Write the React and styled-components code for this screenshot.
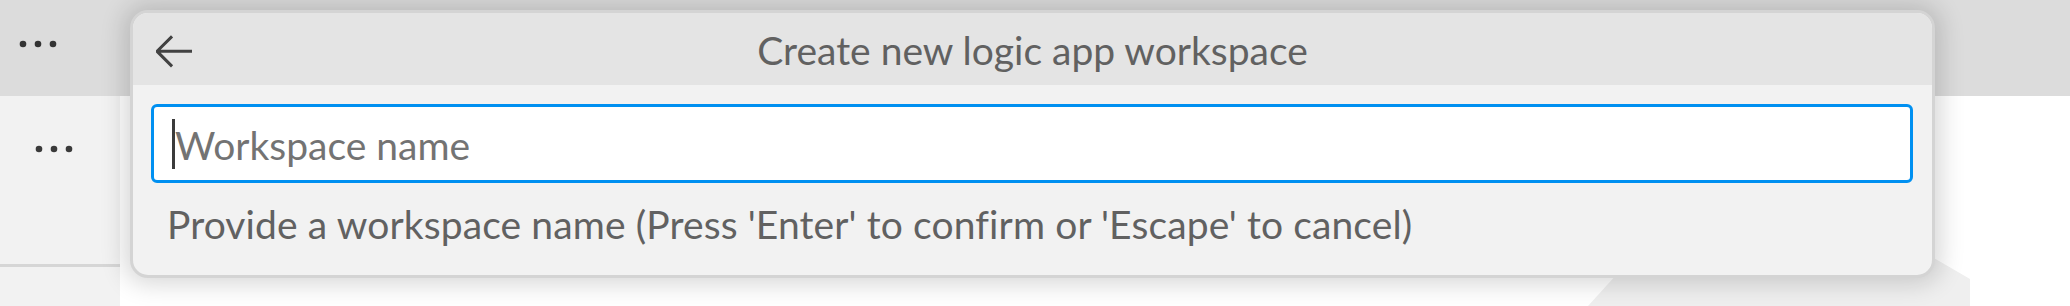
import React from 'react'
import styled, { createGlobalStyle } from 'styled-components'

const GlobalStyle = createGlobalStyle`
  html, body {
    margin: 0;
    padding: 0;
    background: #ffffff;
  }
  body {
    font-family: "Segoe UI", Lato, "Open Sans", sans-serif;
  }`

const Page = styled.div`
  position: relative;
  width: 2070px;
  height: 306px;
  overflow: hidden;
  display: flex;
  flex-direction: column;
  background: #ffffff;`

const TopBar = styled.div`
  height: 96px;
  flex: none;
  background: #dcdcdc;
  display: flex;
  align-items: flex-start;
  padding: 39px 0 0 18px;
  box-sizing: border-box;`

const Main = styled.div`
  flex: 1;
  display: flex;`

const Sidebar = styled.div`
  width: 120px;
  flex: none;
  background: #f2f2f2;`

const SidebarSection = styled.div`
  height: 171px;
  border-bottom: 3px solid #d6d6d6;
  padding: 48px 0 0 34px;
  box-sizing: border-box;
  display: flex;
  align-items: flex-start;`

const Editor = styled.div`
  position: relative;
  flex: 1;
  background: #ffffff;`

const Backdrop = styled.svg`
  position: absolute;
  left: 0;
  top: 0;`

const QuickInput = styled.div`
  position: absolute;
  left: 130px;
  top: 10px;
  width: 1805px;
  box-sizing: border-box;
  border: 3px solid #d4d4d4;
  border-radius: 18px;
  background: #f2f2f2;
  box-shadow: 0 0 24px 6px rgba(0, 0, 0, 0.16);
  overflow: hidden;`

const Header = styled.div`
  height: 72px;
  background: #e4e4e4;
  display: grid;
  grid-template-columns: 1fr auto 1fr;
  align-items: center;
  padding: 0 17px;`

const BackButton = styled.button`
  justify-self: start;
  width: 48px;
  height: 48px;
  padding: 0;
  border: none;
  background: transparent;
  display: flex;
  cursor: pointer;`

const Title = styled.div`
  font-size: 39px;
  color: #616161;
  line-height: 72px;
  padding-top: 1px;`

const Body = styled.div`
  padding: 19px 19px 18px 18px;`

const InputBox = styled.div`
  height: 79px;
  box-sizing: border-box;
  border: 3px solid #0090f1;
  border-radius: 6px;
  background: #ffffff;
  display: flex;
  align-items: center;
  padding-left: 18px;`

const Caret = styled.span`
  width: 3px;
  height: 50px;
  background: #3b3b3b;
  flex: none;`

const Placeholder = styled.span`
  font-size: 39px;
  color: #737373;
  padding-top: 2px;`

const Message = styled.div`
  margin-top: 8px;
  padding-left: 16px;
  font-size: 39px;
  line-height: 66px;
  letter-spacing: 0.12px;
  color: #616161;`

function Dots({ tinted }) {
  return (
    <svg width="42" height="10" viewBox="0 0 42 10">
      {[5, 20, 35].map(cx => (
        <circle key={cx} cx={cx} cy="5" r="3.3" fill={tinted ? '#3a3a3a' : '#333'} />
      ))}
    </svg>
  )
}

function ArrowLeft() {
  return (
    <svg width="48" height="48" viewBox="0 0 16 16" fill="#424242">
      <path d="M7 3.093l-5 5V8.8l5 5 .707-.707-4.14-4.147H14v-1H3.56L7.7 3.8 7 3.093z" />
    </svg>
  )
}

export default function App() {
  return (
    <>
      <GlobalStyle />
      <Page>
        <TopBar>
          <Dots />
        </TopBar>
        <Main>
          <Sidebar>
            <SidebarSection>
              <Dots tinted />
            </SidebarSection>
          </Sidebar>
          <Editor>
            <Backdrop width="1950" height="210" viewBox="0 0 1950 210">
              <polygon points="1468,210 1616,47 1850,183 1850,210" fill="#efefef" />
            </Backdrop>
          </Editor>
        </Main>
        <QuickInput>
          <Header>
            <BackButton aria-label="Back">
              <ArrowLeft />
            </BackButton>
            <Title>Create new logic app workspace</Title>
            <span />
          </Header>
          <Body>
            <InputBox>
              <Caret />
              <Placeholder>Workspace name</Placeholder>
            </InputBox>
            <Message>Provide a workspace name (Press 'Enter' to confirm or 'Escape' to cancel)</Message>
          </Body>
        </QuickInput>
      </Page>
    </>
  )
}
